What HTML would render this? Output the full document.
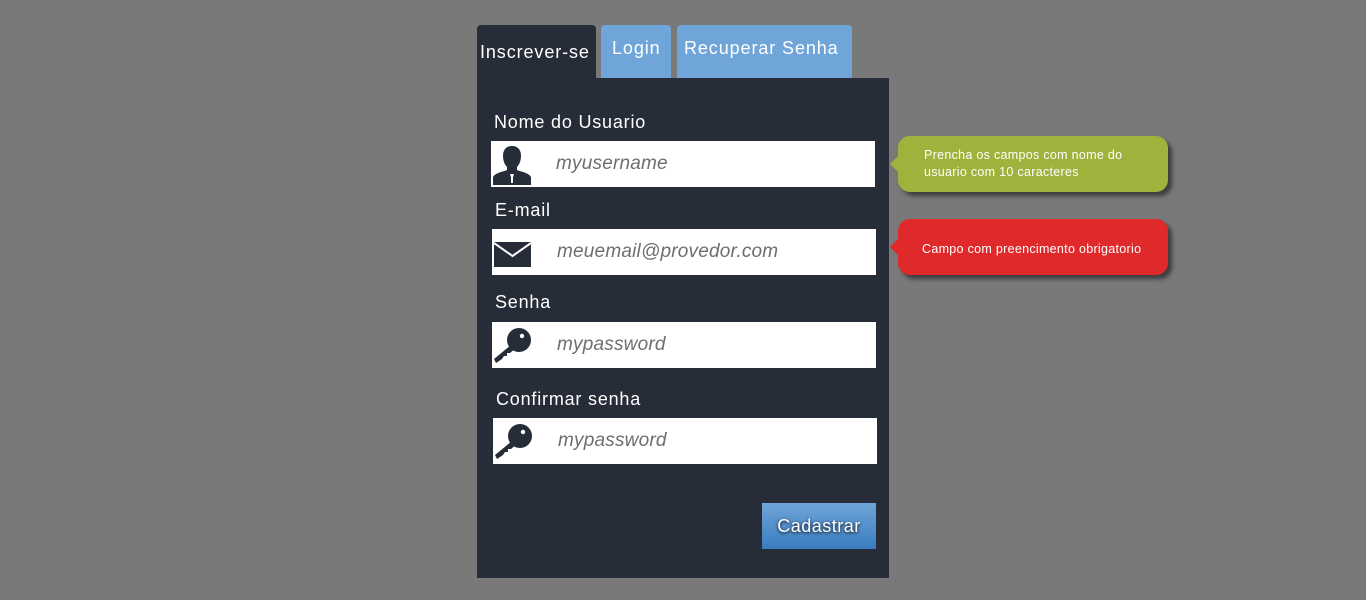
<!DOCTYPE html><html><head><style>
body{margin:0;width:1366px;height:600px;background:#797979;font-family:"Liberation Sans",sans-serif;position:relative;overflow:hidden}
.a{position:absolute}
.tab{position:absolute;top:25px;height:53px;border-radius:4px 4px 0 0;color:#fff;font-size:18px;letter-spacing:.9px}
.lbl{position:absolute;color:#fff;font-size:18px;letter-spacing:.8px}
.inp{position:absolute;width:384px;height:46px;background:#fff}
.inp span{position:absolute;left:65px;top:12px;font-style:italic;color:#6e6e6e;font-size:19px;letter-spacing:.2px}
.inp svg{position:absolute;left:1px;top:4px}
.tip{position:absolute;left:898px;width:270px;height:56px;border-radius:12px;box-shadow:4px 4px 4px rgba(0,0,0,.5);color:#fff;font-size:12.5px;letter-spacing:.3px}
.tip:before{content:"";position:absolute;left:-8px;top:20px;border:8px solid transparent;border-left:0;border-right-color:inherit}
</style></head><body>
<div class="a" style="left:477px;top:78px;width:412px;height:500px;background:#272d38"></div>
<div class="tab" style="left:477px;width:119px;background:#272d38"><span class="a" style="left:3px;top:17px">Inscrever-se</span></div>
<div class="tab" style="left:601px;width:70px;background:#6fa5d8"><span class="a" style="left:11px;top:13px">Login</span></div>
<div class="tab" style="left:677px;width:175px;background:#6fa5d8"><span class="a" style="left:7px;top:13px">Recuperar Senha</span></div>
<div class="lbl" style="left:494px;top:112px">Nome do Usuario</div>
<div class="inp" style="left:491px;top:141px"><svg width="40" height="40" viewBox="0 0 40 40"><path d="M20 1c-6 0-9 4-9 10 0 5 2 9 4 11v3c-5 2-12 3-14 7v8h38v-8c-2-4-9-5-14-7v-3c2-2 4-6 4-11 0-6-3-10-9-10z" fill="#272d38"/><path d="M18 29h4l-1 3v6h-2v-6z" fill="#fff"/></svg><span>myusername</span></div>
<div class="lbl" style="left:495px;top:200px">E-mail</div>
<div class="inp" style="left:492px;top:229px"><svg width="40" height="40" viewBox="0 0 40 40"><path d="M1 9h37v25H1z" fill="#272d38"/><path d="M1 10l18.5 13L38 10" stroke="#fff" stroke-width="2" fill="none"/></svg><span>meuemail@provedor.com</span></div>
<div class="lbl" style="left:495px;top:292px">Senha</div>
<div class="inp" style="left:492px;top:322px"><svg width="40" height="40" viewBox="0 0 40 40"><circle cx="26" cy="14" r="12" fill="#272d38"/><path d="M18 19L1 33l2 4 6-4 2-3 3 0 0-3 3 0 6-5z" fill="#272d38"/><circle cx="29" cy="10" r="2.2" fill="#fff"/></svg><span>mypassword</span></div>
<div class="lbl" style="left:496px;top:389px">Confirmar senha</div>
<div class="inp" style="left:493px;top:418px"><svg width="40" height="40" viewBox="0 0 40 40"><circle cx="26" cy="14" r="12" fill="#272d38"/><path d="M18 19L1 33l2 4 6-4 2-3 3 0 0-3 3 0 6-5z" fill="#272d38"/><circle cx="29" cy="10" r="2.2" fill="#fff"/></svg><span>mypassword</span></div>
<div class="a" style="left:762px;top:503px;width:114px;height:46px;background:linear-gradient(#6fa5d8,#3a7cc0);color:#fff;font-size:18px;text-align:center;line-height:46px;text-shadow:0 1px 3px #000;letter-spacing:.5px">Cadastrar</div>
<div class="tip" style="top:136px;background:#a0b23b;border-color:#a0b23b"><div class="a" style="left:26px;top:11px;line-height:17px">Prencha os campos com nome do<br>usuario com 10 caracteres</div></div>
<div class="tip" style="top:219px;background:#e0292b;border-color:#e0292b"><div class="a" style="left:24px;top:23px">Campo com preencimento obrigatorio</div></div>
</body></html>
